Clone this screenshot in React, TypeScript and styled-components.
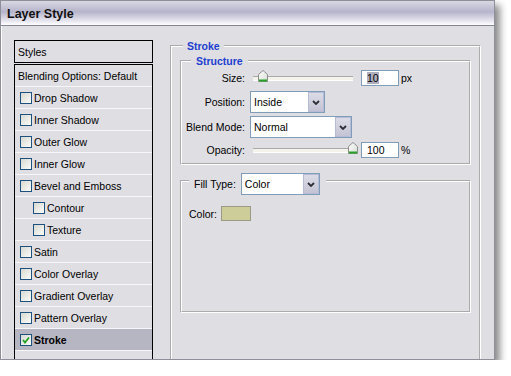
import React from "react";
import styled, { createGlobalStyle } from "styled-components";

const GlobalStyle = createGlobalStyle`
    html, body {
        margin: 0;
        padding: 0;
        background: #ffffff;
    }
    body {
        font-family: "Liberation Sans", Arial, sans-serif;
        font-size: 10.5px;
        color: #000;
    }
`;

const Window = styled.div`
    width: 495px;
    height: 360px;
    box-sizing: border-box;
    display: flex;
    flex-direction: column;
    background: #dfdee3;
    border: 1px solid #8f8f9a;
    box-shadow: 5px 5px 7px rgba(0, 0, 0, 0.45), inset 1px 1px 0 #ffffff;
    overflow: hidden;
`;

const TitleBar = styled.div`
    height: 25px;
    flex-shrink: 0;
    display: flex;
    align-items: center;
    padding: 1px 0 0 6px;
    box-sizing: border-box;
    border-bottom: 1px solid #84849a;
    background: linear-gradient(#d9d8e2 0%, #b6b4cb 45%, #e9e8f0 85%, #ffffff 100%);
    font-size: 12.5px;
    font-weight: bold;
    color: #111;
`;

const Body = styled.div`
    flex: 1;
    display: flex;
    align-items: flex-start;
    padding: 14px 14px 0 13px;
    gap: 17px;
    overflow: hidden;
`;

const StylesColumn = styled.div`
    width: 139px;
    flex-shrink: 0;
    display: flex;
    flex-direction: column;
    gap: 1px;
`;

const StylesHeader = styled.div`
    height: 23px;
    box-sizing: border-box;
    border: 1px solid #000;
    display: flex;
    align-items: center;
    padding-left: 3px;
`;

const StyleList = styled.div`
    border: 1px solid #000;
    border-bottom: none;
    height: 320px;
`;

const StyleRow = styled.div<{ $indent: number; $selected?: boolean }>`
    height: 22px;
    box-sizing: border-box;
    display: flex;
    align-items: center;
    padding-left: ${(p) => p.$indent}px;
    border-bottom: 1px solid #f6f6f8;
    background: ${(p) => (p.$selected ? "#b6b5c2" : "transparent")};
    font-weight: ${(p) => (p.$selected ? "bold" : "normal")};
`;

const Box = styled.span`
    width: 12px;
    height: 12px;
    box-sizing: border-box;
    margin-right: 2px;
    border: 1px solid #1c5180;
    background: linear-gradient(135deg, #d9d9d3, #fbfbf8);
    display: flex;
    align-items: center;
    justify-content: center;
`;

const OuterGroup = styled.fieldset`
    width: 311px;
    min-height: 340px;
    box-sizing: border-box;
    margin: 0;
    padding: 0 8px;
    border: 2px groove #ffffff;
    border-bottom: none;
    flex-shrink: 0;
`;

const Legend = styled.legend<{ $offset: number; $pad: number }>`
    margin-left: ${(p) => p.$offset}px;
    padding: 0 ${(p) => p.$pad}px;
    line-height: 12px;
    font-weight: bold;
    color: #1d3fcf;
`;

const Group = styled.fieldset`
    margin: 3px 0 0 0;
    padding: 0 0 3px 0;
    border: 2px groove #ffffff;
`;

const FieldGrid = styled.div`
    display: grid;
    grid-template-columns: 63px auto;
    grid-template-rows: 22px 24px 24px 20px;
    row-gap: 1px;
    column-gap: 5px;
    align-items: center;
`;

const Label = styled.span`
    text-align: right;
    white-space: nowrap;
`;

const Controls = styled.div`
    display: flex;
    align-items: center;
`;

const SliderTrack = styled.div`
    position: relative;
    width: 100px;
    height: 3px;
    margin-left: 3px;
    background: #f3f3ec;
    border-top: 1px solid #a9a9a9;
    border-bottom: 1px solid #ffffff;
`;

const Thumb = styled.svg`
    position: absolute;
    top: -7px;
`;

const NumberBox = styled.div`
    width: 38px;
    height: 16px;
    box-sizing: border-box;
    margin-left: 8px;
    border: 1px solid #7f9db9;
    background: #fff;
    display: flex;
    align-items: center;
    padding-left: 5px;
`;

const Highlight = styled.span`
    background: #aeaebd;
`;

const Unit = styled.span`
    margin-left: 2px;
`;

const Select = styled.div<{ $width: number }>`
    width: ${(p) => p.$width}px;
    height: 22px;
    box-sizing: border-box;
    border: 1px solid #7f9db9;
    background: #fff;
    display: flex;
    align-items: center;
    justify-content: space-between;
    padding-left: 3px;
`;

const DropButton = styled.span`
    width: 16px;
    height: 20px;
    box-sizing: border-box;
    border: 1px solid #b7bcd6;
    background: linear-gradient(#dcdce8, #c3c3d4);
    display: flex;
    align-items: center;
    justify-content: center;
`;

const FillGroup = styled(Group)`
    margin-top: 2px;
    height: 146px;
    box-sizing: border-box;
`;

const FillLegend = styled.legend`
    margin-left: 7px;
    padding: 6px 6px 0 5px;
    display: flex;
    align-items: center;
    gap: 5px;
`;

const ColorRow = styled.div`
    display: flex;
    align-items: center;
    gap: 4px;
    padding: 11px 0 0 7px;
`;

const Swatch = styled.div<{ $color: string }>`
    width: 30px;
    height: 15px;
    box-sizing: border-box;
    border: 1px solid #9a9a86;
    background: ${(p) => p.$color};
`;

const styles: { name: string; indent?: boolean; checkbox?: boolean; checked?: boolean }[] = [
    { name: "Blending Options: Default", checkbox: false },
    { name: "Drop Shadow" },
    { name: "Inner Shadow" },
    { name: "Outer Glow" },
    { name: "Inner Glow" },
    { name: "Bevel and Emboss" },
    { name: "Contour", indent: true },
    { name: "Texture", indent: true },
    { name: "Satin" },
    { name: "Color Overlay" },
    { name: "Gradient Overlay" },
    { name: "Pattern Overlay" },
    { name: "Stroke", checked: true },
];

function Check({ on }: { on?: boolean }) {
    return (
        <Box>
            {on && (
                <svg width="8" height="8" viewBox="0 0 8 8">
                    <polyline points="1,4 3,6.5 7,1.5" fill="none" stroke="#21a121" strokeWidth="1.8" />
                </svg>
            )}
        </Box>
    );
}

function Chevron() {
    return (
        <DropButton>
            <svg width="8" height="5" viewBox="0 0 8 5">
                <polyline points="1,1 4,4 7,1" fill="none" stroke="#2e2e36" strokeWidth="1.8" />
            </svg>
        </DropButton>
    );
}

function Slider({ value }: { value: number }) {
    return (
        <SliderTrack>
            <Thumb width="10" height="12" viewBox="0 0 10 12" style={{ left: value - 5 }}>
                <defs>
                    <linearGradient id="thumbFill" x1="0" y1="0" x2="1" y2="1">
                        <stop offset="0" stopColor="#ffffff" />
                        <stop offset="1" stopColor="#d6dcd6" />
                    </linearGradient>
                </defs>
                <path d="M0.5 4.5 L5 0.5 L9.5 4.5 V11.5 H0.5 Z" fill="url(#thumbFill)" stroke="#8a8f8a" />
                <path d="M1 10.5 H9" stroke="#27a327" strokeWidth="2" />
            </Thumb>
        </SliderTrack>
    );
}

export default function App() {
    return (
        <>
            <GlobalStyle />
            <Window>
                <TitleBar>Layer Style</TitleBar>
                <Body>
                    <StylesColumn>
                        <StylesHeader>Styles</StylesHeader>
                        <StyleList>
                            {styles.map((s) => (
                                <StyleRow
                                    key={s.name}
                                    $indent={s.checkbox === false ? 3 : s.indent ? 18 : 5}
                                    $selected={s.checked}
                                >
                                    {s.checkbox !== false && <Check on={s.checked} />}
                                    {s.name}
                                </StyleRow>
                            ))}
                        </StyleList>
                    </StylesColumn>

                    <OuterGroup>
                        <Legend $offset={3} $pad={4}>Stroke</Legend>
                        <Group>
                            <Legend $offset={9} $pad={5}>Structure</Legend>
                            <FieldGrid>
                                <Label>Size:</Label>
                                <Controls>
                                    <Slider value={10} />
                                    <NumberBox>
                                        <Highlight>10</Highlight>
                                    </NumberBox>
                                    <Unit>px</Unit>
                                </Controls>

                                <Label>Position:</Label>
                                <Controls>
                                    <Select $width={75}>
                                        Inside
                                        <Chevron />
                                    </Select>
                                </Controls>

                                <Label>Blend Mode:</Label>
                                <Controls>
                                    <Select $width={102}>
                                        Normal
                                        <Chevron />
                                    </Select>
                                </Controls>

                                <Label>Opacity:</Label>
                                <Controls>
                                    <Slider value={100} />
                                    <NumberBox>100</NumberBox>
                                    <Unit>%</Unit>
                                </Controls>
                            </FieldGrid>
                        </Group>

                        <FillGroup>
                            <FillLegend>
                                <span>Fill Type:</span>
                                <Select $width={79}>
                                    Color
                                    <Chevron />
                                </Select>
                            </FillLegend>
                            <ColorRow>
                                <span>Color:</span>
                                <Swatch $color="#cdcd9a" />
                            </ColorRow>
                        </FillGroup>
                    </OuterGroup>
                </Body>
            </Window>
        </>
    );
}
